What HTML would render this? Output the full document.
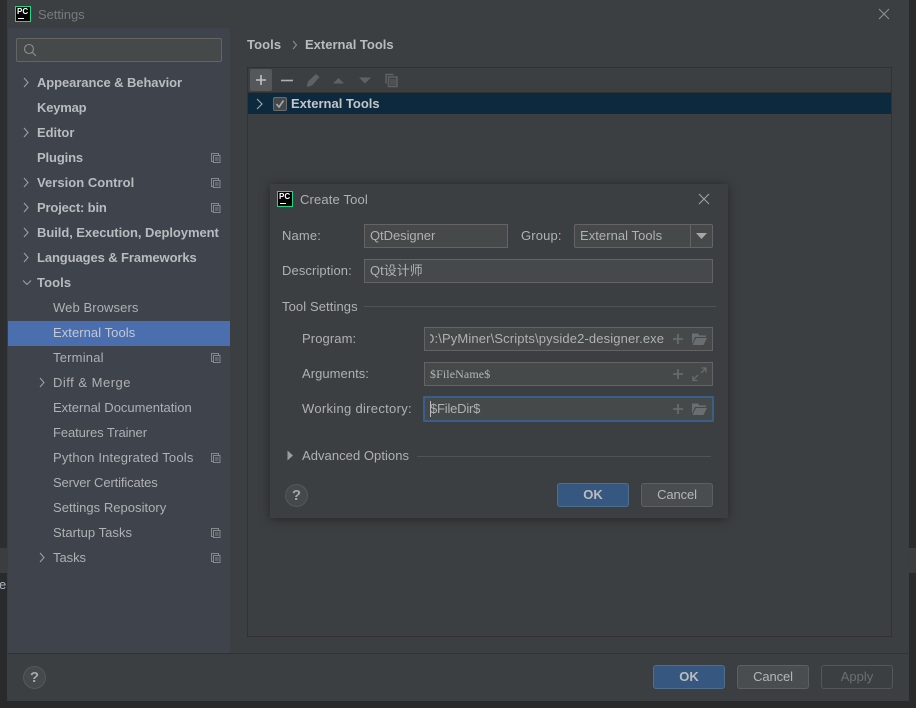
<!DOCTYPE html>
<html><head><meta charset="utf-8">
<style>
html,body{margin:0;padding:0;width:916px;height:708px;overflow:hidden;background:#292a2b}
*{box-sizing:border-box}
body{font-family:"Liberation Sans","Noto Sans CJK SC",sans-serif;font-size:13px;color:#afb1b3;position:relative}
.a{position:absolute}
.t{position:absolute;white-space:nowrap;line-height:18px;letter-spacing:.05px}
.b{font-weight:bold;color:#b9bcbe;letter-spacing:-.08px}
.inp{position:absolute;background:#45494a;border:1px solid #646464;height:24px}
.btn{position:absolute;height:24px;border-radius:3px;text-align:center;line-height:22px}
.ok{background:#365880;border:1px solid #4c708c;color:#bbbcbd;font-weight:bold}
.cn{background:#4a4d4f;border:1px solid #5e6060;color:#b4b6b8;letter-spacing:-.1px}
svg{position:absolute;overflow:visible}
</style></head><body>
<!-- background strips -->
<div class="a" style="left:0;top:0;width:8px;height:548px;background:#2d2e2f"></div>
<div class="a" style="left:0;top:548px;width:8px;height:25px;background:#3b3d3f"></div>
<div class="t" style="left:-1px;top:576px;color:#a9b7c6">e</div>
<div class="a" style="left:908px;top:548px;width:8px;height:25px;background:#3b3d3f"></div>

<!-- Settings window -->
<div class="a" style="left:7px;top:0;width:902px;height:701px;background:#3c3f41"></div>
<div class="a" style="left:8px;top:28px;width:222px;height:625px;background:#3e434c"></div>
<div class="a" style="left:8px;top:653px;width:900px;height:1px;background:#323232"></div>

<!-- logo -->
<div class="a" style="left:15px;top:6px;width:16px;height:16px;background:#000;border:1px solid #21d789"></div>
<div class="t" style="left:17px;top:7px;font-size:8px;font-weight:bold;color:#fff;line-height:9px;letter-spacing:0">PC</div>
<div class="a" style="left:18px;top:18px;width:6px;height:1px;background:#fff"></div>
<div class="t" style="left:38px;top:6px;color:#787b7d;letter-spacing:-.05px">Settings</div>
<svg style="left:878px;top:8px" width="12" height="12"><path d="M1 1L11 11M11 1L1 11" stroke="#8e9092" stroke-width="1.1" fill="none"/></svg>

<!-- search -->
<div class="a" style="left:16px;top:38px;width:206px;height:24px;background:#45494a;border:1px solid #646464;border-radius:2px"></div>
<svg style="left:23px;top:43px" width="14" height="14"><circle cx="6" cy="6" r="4.5" stroke="#8b8e90" fill="none" stroke-width="1.1"/><path d="M9.5 9.5L13 13" stroke="#8b8e90" stroke-width="1.2"/></svg>

<!-- selected row -->
<div class="a" style="left:8px;top:321px;width:222px;height:25px;background:#4b6eaf"></div>

<!-- tree chevrons -->
<svg style="left:0;top:0" width="60" height="600" fill="none" stroke="#9da0a2" stroke-width="1.1">
<path d="M24 78L28 82.500L24 87M24 128L28 132.500L24 137M24 178L28 182.500L24 187M24 203L28 207.500L24 212M24 228L28 232.500L24 237M24 253L28 257.500L24 262"/>
<path d="M23 280.500L27 284.500L31 280.500"/>
<path d="M40 378L44 382.500L40 387M40 553L44 557.500L40 562"/>
</svg>

<!-- tree labels -->
<div class="t b" style="left:37px;top:74px;letter-spacing:-.08px">Appearance &amp; Behavior</div>
<div class="t b" style="left:37px;top:99px;letter-spacing:-.2px">Keymap</div>
<div class="t b" style="left:37px;top:124px;letter-spacing:-.03px">Editor</div>
<div class="t b" style="left:37px;top:149px;letter-spacing:-.13px">Plugins</div>
<div class="t b" style="left:37px;top:174px;letter-spacing:.03px">Version Control</div>
<div class="t b" style="left:37px;top:199px;letter-spacing:-.15px">Project: bin</div>
<div class="t b" style="left:37px;top:224px;letter-spacing:-.06px">Build, Execution, Deployment</div>
<div class="t b" style="left:37px;top:249px;letter-spacing:-.1px">Languages &amp; Frameworks</div>
<div class="t b" style="left:37px;top:274px;letter-spacing:.1px">Tools</div>
<div class="t" style="left:53px;top:299px;letter-spacing:.1px">Web Browsers</div>
<div class="t" style="left:53px;top:324px;color:#c3c9d2;letter-spacing:.06px">External Tools</div>
<div class="t" style="left:53px;top:349px;letter-spacing:.2px">Terminal</div>
<div class="t" style="left:53px;top:374px;letter-spacing:.5px">Diff &amp; Merge</div>
<div class="t" style="left:53px;top:399px;letter-spacing:0">External Documentation</div>
<div class="t" style="left:53px;top:424px;letter-spacing:-.09px">Features Trainer</div>
<div class="t" style="left:53px;top:449px;letter-spacing:.18px">Python Integrated Tools</div>
<div class="t" style="left:53px;top:474px;letter-spacing:-.12px">Server Certificates</div>
<div class="t" style="left:53px;top:499px;letter-spacing:.03px">Settings Repository</div>
<div class="t" style="left:53px;top:524px;letter-spacing:.04px">Startup Tasks</div>
<div class="t" style="left:53px;top:549px;letter-spacing:-.05px">Tasks</div>

<!-- project-scope icons -->
<svg style="left:0;top:0" width="230" height="600" fill="none" stroke="#878a8c" stroke-width="1">
<path d="M213.500 161.500h-2v-8h7v2M213.500 155.500h6.500v7h-6.500zM215 158h3.500M215 160h3.500"/>
<path d="M213.500 186.500h-2v-8h7v2M213.500 180.500h6.500v7h-6.500zM215 183h3.500M215 185h3.500"/>
<path d="M213.500 211.500h-2v-8h7v2M213.500 205.500h6.500v7h-6.500zM215 208h3.500M215 210h3.500"/>
<path d="M213.500 361.500h-2v-8h7v2M213.500 355.500h6.500v7h-6.500zM215 358h3.500M215 360h3.500"/>
<path d="M213.500 461.500h-2v-8h7v2M213.500 455.500h6.500v7h-6.500zM215 458h3.500M215 460h3.500"/>
<path d="M213.500 536.500h-2v-8h7v2M213.500 530.500h6.500v7h-6.500zM215 533h3.500M215 535h3.500"/>
<path d="M213.500 561.500h-2v-8h7v2M213.500 555.500h6.500v7h-6.500zM215 558h3.500M215 560h3.500"/>
</svg>

<!-- breadcrumb -->
<div class="t b" style="left:247px;top:36px;letter-spacing:.1px">Tools</div>
<svg style="left:292px;top:40px" width="6" height="10"><path d="M1 1L4.500 5L1 9" stroke="#8f9193" fill="none"/></svg>
<div class="t b" style="left:305px;top:36px;letter-spacing:0">External Tools</div>

<!-- external tools panel -->
<div class="a" style="left:247px;top:67px;width:645px;height:570px;border:1px solid #323232"></div>
<div class="a" style="left:248px;top:92px;width:643px;height:1px;background:#323232"></div>
<div class="a" style="left:250px;top:69px;width:22px;height:22px;background:#55585a;border-radius:2px"></div>
<svg style="left:250px;top:69px" width="160" height="22">
<path d="M6 11H16M11 6V16" stroke="#c0c2c4" stroke-width="1.6" fill="none"/>
<path d="M31 11.500H43" stroke="#aeb0b2" stroke-width="1.6" fill="none"/>
<path d="M57 16L58 12.500L66 5L69.500 8L62 16.500L57 18Z" fill="#5f6264"/>
<path d="M83 14.500L88.500 9L94 14.500Z" fill="#5f6264"/>
<path d="M109 8.500L115 14.500L121 8.500Z" fill="#5f6264"/>
<path d="M136 14.500V5.500H143.500M138.500 8H147V17.500H138.500Z" stroke="#5f6264" stroke-width="1.500" fill="none"/>
<path d="M140 11H146M140 13H146M140 15H146" stroke="#5f6264" fill="none"/>
</svg>
<div class="a" style="left:248px;top:93px;width:643px;height:21px;background:#0d293e"></div>
<svg style="left:256px;top:98px" width="8" height="12"><path d="M1 1L6 6L1 11" stroke="#a7a9ab" stroke-width="1.1" fill="none"/></svg>
<div class="a" style="left:273px;top:97px;width:14px;height:14px;background:#43494a;border:1px solid #6b6b6b;border-radius:2px"></div>
<svg style="left:273px;top:97px" width="14" height="14"><path d="M3.500 7L6 10L10.500 3.500" stroke="#a7a9ab" stroke-width="1.600" fill="none"/></svg>
<div class="t b" style="left:291px;top:95px;color:#c3c6c8;letter-spacing:0">External Tools</div>

<!-- Create Tool dialog -->
<div class="a" style="left:270px;top:184px;width:458px;height:334px;background:#3c3f41;box-shadow:0 1px 10px rgba(0,0,0,.4)"></div>
<div class="a" style="left:277px;top:191px;width:16px;height:16px;background:#000;border:1px solid #21d789"></div>
<div class="t" style="left:279px;top:192px;font-size:8px;font-weight:bold;color:#fff;line-height:9px;letter-spacing:0">PC</div>
<div class="a" style="left:280px;top:203px;width:6px;height:1px;background:#fff"></div>
<div class="t" style="left:300px;top:191px;letter-spacing:.15px">Create Tool</div>
<svg style="left:699px;top:194px" width="10" height="10"><path d="M0 0L10 10M10 0L0 10" stroke="#a0a2a4" stroke-width="1.100" fill="none"/></svg>

<div class="t" style="left:282px;top:227px;letter-spacing:.15px">Name:</div>
<div class="inp" style="left:364px;top:224px;width:144px"></div>
<div class="t" style="left:370px;top:227px;letter-spacing:-.05px">QtDesigner</div>
<div class="t" style="left:521px;top:227px;letter-spacing:.15px">Group:</div>
<div class="a" style="left:574px;top:224px;width:139px;height:24px;background:#45494a;border:1px solid #646464;border-radius:2px"></div>
<div class="a" style="left:690px;top:225px;width:1px;height:22px;background:#646464"></div>
<svg style="left:696px;top:233px" width="12" height="7"><path d="M0 0H11L5.500 6Z" fill="#a5a7a9"/></svg>
<div class="t" style="left:580px;top:227px">External Tools</div>

<div class="t" style="left:282px;top:262px;letter-spacing:.1px">Description:</div>
<div class="inp" style="left:364px;top:259px;width:349px"></div>
<div class="t" style="left:370px;top:262px;letter-spacing:0">Qt设计师</div>

<div class="t" style="left:282px;top:298px;letter-spacing:.1px">Tool Settings</div>
<div class="a" style="left:364px;top:306px;width:352px;height:1px;background:#505254"></div>

<div class="t" style="left:302px;top:330px;letter-spacing:.1px">Program:</div>
<div class="inp" style="left:424px;top:327px;width:289px"></div>
<div class="a" style="left:425px;top:328px;width:243px;height:22px;overflow:hidden"><div class="t" style="left:0;top:2px;letter-spacing:.13px">D:\PyMiner\Scripts\pyside2-designer.exe</div><div class="a" style="left:0;top:0;width:5px;height:22px;background:#45494a"></div></div>

<div class="t" style="left:302px;top:365px">Arguments:</div>
<div class="inp" style="left:424px;top:362px;width:289px"></div>
<div class="t" style="left:430px;top:365px;font-family:'Liberation Serif',serif;font-size:12px;letter-spacing:.1px;color:#b4b6b8">$FileName$</div>

<div class="t" style="left:302px;top:400px;letter-spacing:.3px">Working directory:</div>
<div class="a" style="left:423px;top:396px;width:291px;height:26px;background:#45494a;border:2px solid #395f89;border-radius:1px"></div>
<div class="t" style="left:430px;top:400px;letter-spacing:-.2px">$FileDir$</div>
<div class="a" style="left:430px;top:401px;width:1px;height:16px;background:#bbbbbb"></div>

<!-- field icons -->
<svg style="left:670px;top:330px" width="42" height="90" fill="none">
<g stroke="#676b6d" stroke-width="1.800">
<path d="M3 9H13M8 4V14"/><path d="M3 44H13M8 39V49"/><path d="M3 79H13M8 74V84"/>
</g>
<g fill="#6a6e70">
<path d="M22 3.500H28L29.500 5.500H36V7H25L22 14Z"/><path d="M26 8H37L33.500 15H22.500Z"/>
<path d="M22 73.500H28L29.500 75.500H36V77H25L22 84Z"/><path d="M26 78H37L33.500 85H22.500Z"/>
</g>
<g stroke="#676b6d" stroke-width="1.300"><path d="M23 50L28 45M23 46V50.500H27.500"/><path d="M36 38L31 43M31.500 38H36V42.500"/></g>
</svg>

<!-- advanced -->
<svg style="left:287px;top:450px" width="7" height="11"><path d="M0.500 0.500L6 5.500L0.500 10.500Z" fill="#9a9c9e"/></svg>
<div class="t" style="left:302px;top:447px;letter-spacing:.05px">Advanced Options</div>
<div class="a" style="left:417px;top:456px;width:294px;height:1px;background:#505254"></div>

<div class="a" style="left:285px;top:484px;width:23px;height:23px;border-radius:50%;background:#46494b;border:1px solid #55585a;text-align:center;line-height:21px;font-weight:bold;font-size:15px;color:#a5a7a9">?</div>
<div class="btn ok" style="left:557px;top:483px;width:72px">OK</div>
<div class="btn cn" style="left:641px;top:483px;width:72px">Cancel</div>

<!-- footer -->
<div class="a" style="left:23px;top:666px;width:23px;height:23px;border-radius:50%;background:#46494b;border:1px solid #55585a;text-align:center;line-height:21px;font-weight:bold;font-size:15px;color:#a5a7a9">?</div>
<div class="btn ok" style="left:653px;top:665px;width:72px">OK</div>
<div class="btn cn" style="left:737px;top:665px;width:72px">Cancel</div>
<div class="btn" style="left:821px;top:665px;width:72px;border:1px solid #545658;color:#6c6f71">Apply</div>
</body></html>
